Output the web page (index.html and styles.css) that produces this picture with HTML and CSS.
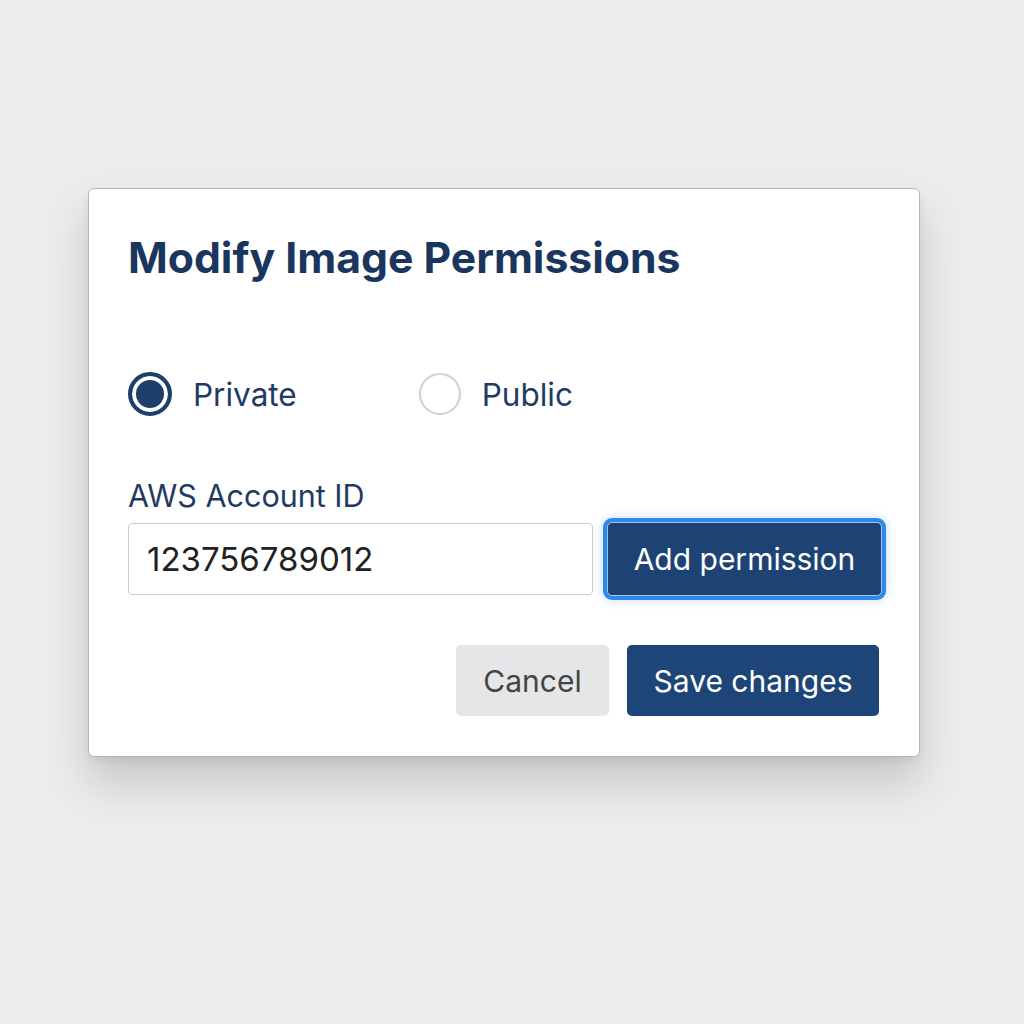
FILE: index.html
```html
<!DOCTYPE html>
<html>
<head>
<meta charset="utf-8">
<link rel="stylesheet" href="styles.css">
</head>
<body>
<div class="dialog">
  <h1 class="title">Modify Image Permissions</h1>
  <div class="radios">
    <label class="radio">
      <span class="dot checked"></span>
      <span class="radio-label">Private</span>
    </label>
    <label class="radio">
      <span class="dot"></span>
      <span class="radio-label">Public</span>
    </label>
  </div>
  <div class="field-label">AWS Account ID</div>
  <div class="field-row">
    <div class="input">123756789012</div>
    <button class="btn add">Add permission</button>
  </div>
  <div class="actions">
    <button class="btn cancel">Cancel</button>
    <button class="btn primary">Save changes</button>
  </div>
</div>
</body>
</html>
```
FILE: styles.css
```css
html, body {
  margin: 0;
  padding: 0;
}
body {
  background: #ececec;
  font-family: Inter, "Noto Sans", sans-serif;
  width: 1024px;
  height: 1024px;
  padding-top: 188px;
  box-sizing: border-box;
}
.dialog {
  margin-left: 88px;
  width: 832px;
  height: 569px;
  box-sizing: border-box;
  background: #fff;
  border: 1px solid #b4b4b4;
  border-radius: 6px;
  box-shadow: 0 26px 44px rgba(0,0,0,0.16), 0 4px 10px rgba(0,0,0,0.06);
  padding: 43px 37px 40px 39px;
  display: flex;
  flex-direction: column;
}
.title {
  margin: 0;
  font-size: 42.7px;
  line-height: 52px;
  font-weight: 700;
  color: #1a355e;
  letter-spacing: 0;
}
.radios {
  display: flex;
  margin-top: 87px;
  height: 46px;
  align-items: center;
}
.radio {
  display: flex;
  align-items: center;
  gap: 21px;
}
.radio + .radio {
  margin-left: 122px;
}
.dot {
  width: 42px;
  height: 42px;
  box-sizing: border-box;
  border-radius: 50%;
  border: 2px solid #cfcfcf;
  background: #fff;
}
.dot.checked {
  width: 44px;
  height: 44px;
  border: 4px solid #1c3f6c;
  background: #1c3f6c;
  box-shadow: inset 0 0 0 4px #fff;
}
.radio-label {
  font-size: 31.5px;
  color: #1f3a63;
}
.field-label {
  margin-top: 61px;
  font-size: 30.5px;
  line-height: 36px;
  color: #1f3a63;
}
.field-row {
  display: flex;
  align-items: center;
  margin-top: 8px;
  gap: 14px;
}
.input {
  flex: 0 0 465px;
  height: 72px;
  box-sizing: border-box;
  border: 1.5px solid #cccccc;
  border-radius: 4px;
  padding-left: 18px;
  display: flex;
  align-items: center;
  font-size: 33px;
  color: #222;
}
.btn {
  font-family: inherit;
  border: none;
  border-radius: 5px;
  cursor: pointer;
}
.add {
  flex: 0 0 275px;
  height: 74px;
  background: #1c4373;
  color: #fff;
  font-size: 30px;
  border: 1.5px solid #9fc3ea;
  box-shadow: 0 0 0 4px #2e8ae8, 0 0 8px 5px rgba(46,138,232,0.25);
}
.actions {
  display: flex;
  justify-content: flex-end;
  gap: 18px;
  margin-top: 49px;
  margin-right: 3px;
}
.cancel {
  width: 153px;
  height: 71px;
  background: #e5e6e7;
  color: #444;
  font-size: 30px;
}
.primary {
  width: 252px;
  height: 71px;
  background: #1d4577;
  color: #fff;
  font-size: 30px;
}
```
